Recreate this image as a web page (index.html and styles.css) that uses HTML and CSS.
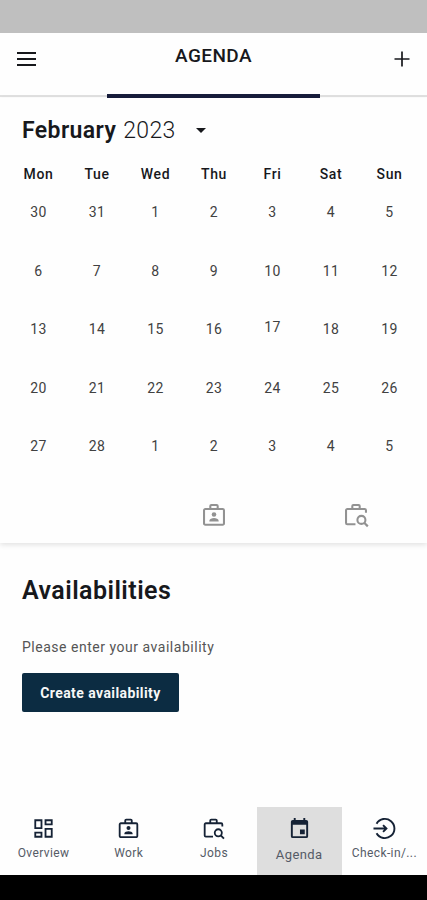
FILE: index.html
```html
<!DOCTYPE html>
<html lang="en">
<head>
    <meta charset="UTF-8">
    <meta name="viewport" content="width=device-width, initial-scale=1.0">
    <title>Agenda</title>
    <link rel="stylesheet" href="styles.css">
</head>
<body>
    <!-- shared icon shapes -->
    <svg width="0" height="0" class="icon-defs">
        <symbol id="icon-work" viewBox="0 0 24 24">
            <path d="M4 6.500h16a1.200 1.200 0 0 1 1.200 1.200v12.100a1.200 1.200 0 0 1-1.200 1.200H4a1.200 1.200 0 0 1-1.200-1.200V7.700A1.200 1.200 0 0 1 4 6.500zM8.600 6.500V3.700a1 1 0 0 1 1-1h4.800a1 1 0 0 1 1 1v2.800" fill="none" stroke="currentColor" stroke-width="1.900"/>
            <circle cx="12" cy="11.500" r="2.100" fill="currentColor"/>
            <path d="M7.700 18v-.8c0-1.500 2.500-2.400 4.300-2.400s4.300.9 4.300 2.400v.8z" fill="currentColor"/>
        </symbol>
        <symbol id="icon-jobs" viewBox="0 0 24 24">
            <path d="M11.500 20.500H4a1.200 1.200 0 0 1-1.200-1.200V7.700A1.200 1.200 0 0 1 4 6.500h16a1.200 1.200 0 0 1 1.200 1.200V10M8.600 6.500V3.700a1 1 0 0 1 1-1h4.800a1 1 0 0 1 1 1v2.800" fill="none" stroke="currentColor" stroke-width="1.900"/>
            <circle cx="17" cy="16.500" r="3.700" fill="none" stroke="currentColor" stroke-width="1.900"/>
            <path d="M19.600 19.200l3.300 3.300" stroke="currentColor" stroke-width="2"/>
        </symbol>
    </svg>

    <div class="status-bar"></div>

    <header class="header">
        <svg class="menu-icon" viewBox="0 0 20 16"><path d="M.5 2h19M.5 8h19M.5 14h19" stroke="currentColor" stroke-width="1.900"/></svg>
        <h1>AGENDA</h1>
        <svg class="add-icon" viewBox="0 0 16 16"><path d="M.5 8h15M8 .5v15" stroke="currentColor" stroke-width="1.700"/></svg>
    </header>
    <div class="tab-line"><div class="tab-active"></div></div>

    <section class="calendar">
        <div class="month">
            <strong>February</strong><span class="year">2023</span>
            <svg class="caret" viewBox="0 0 10 5"><path d="M0 0h10L5 5z" fill="currentColor"/></svg>
        </div>
        <div class="weekdays">
            <span>Mon</span><span>Tue</span><span>Wed</span><span>Thu</span><span>Fri</span><span>Sat</span><span>Sun</span>
        </div>
        <div class="days">
            <span>30</span><span>31</span><span>1</span><span>2</span><span>3</span><span>4</span><span>5</span>
            <span>6</span><span>7</span><span>8</span><span>9</span><span>10</span><span>11</span><span>12</span>
            <span>13</span><span>14</span><span>15</span><span>16</span><span class="today">17</span><span>18</span><span>19</span>
            <span>20</span><span>21</span><span>22</span><span>23</span><span>24</span><span>25</span><span>26</span>
            <span>27</span><span>28</span><span>1</span><span>2</span><span>3</span><span>4</span><span>5</span>
        </div>
        <div class="filters">
            <span></span>
            <svg class="filter-icon"><use href="#icon-work"/></svg>
            <svg class="filter-icon"><use href="#icon-jobs"/></svg>
        </div>
    </section>

    <section class="availabilities">
        <h2>Availabilities</h2>
        <p>Please enter your availability</p>
        <button class="create-button">Create availability</button>
    </section>

    <nav class="bottom-nav">
        <a class="nav-item">
            <svg class="nav-icon" viewBox="0 0 24 24"><path d="M3.400 3.400h6.500v8.200H3.400zM14.100 3.400h6.500v4.300h-6.500zM14.100 12.400h6.500v8.200h-6.500zM3.400 16.300h6.500v4.300H3.400z" fill="none" stroke="currentColor" stroke-width="1.900"/></svg>
            <span>Overview</span>
        </a>
        <a class="nav-item">
            <svg class="nav-icon"><use href="#icon-work"/></svg>
            <span>Work</span>
        </a>
        <a class="nav-item">
            <svg class="nav-icon"><use href="#icon-jobs"/></svg>
            <span>Jobs</span>
        </a>
        <a class="nav-item nav-active">
            <svg class="nav-icon" viewBox="0 0 24 24"><path d="M19 3h-1V1h-2v2H8V1H6v2H5a2 2 0 0 0-2 2v15a2 2 0 0 0 2 2h14a2 2 0 0 0 2-2V5a2 2 0 0 0-2-2zm0 17H5V8h14zM12.500 13h5v5h-5z" fill="currentColor" fill-rule="evenodd"/></svg>
            <span>Agenda</span>
        </a>
        <a class="nav-item">
            <svg class="nav-icon" viewBox="0 0 24 24"><path d="M3.700 7A10 10 0 1 1 3.700 17M.5 12h13M10.500 8.500L14 12l-3.500 3.500" fill="none" stroke="currentColor" stroke-width="2"/></svg>
            <span>Check-in/...</span>
        </a>
    </nav>
    <div class="system-bar"></div>
</body>
</html>
```
FILE: styles.css
```css
* {
    box-sizing: border-box;
}
body {
    margin: 0;
    height: 900px;
    display: flex;
    flex-direction: column;
    overflow: hidden;
    font-family: Roboto, "Liberation Sans", sans-serif;
    background: #fefefe;
    color: #17181c;
}
.icon-defs {
    position: absolute;
}
.status-bar {
    height: 33px;
    background: #bfbfbf;
}
.header {
    height: 61px;
    padding: 0 17px 0 16px;
    display: flex;
    align-items: flex-start;
    justify-content: space-between;
}
.header h1 {
    margin: 12px 4px 0 0;
    font-size: 19px;
    line-height: 22px;
    font-weight: 500;
    letter-spacing: 0.4px;
}
.menu-icon {
    width: 21px;
    height: 16px;
    margin-top: 18px;
}
.add-icon {
    width: 16px;
    height: 16px;
    margin-top: 18px;
}
.tab-line {
    height: 4px;
    background: linear-gradient(#fefefe 1px, #e0e0e0 1px, #e0e0e0 3px, #fefefe 3px);
}
.tab-active {
    width: 213px;
    height: 4px;
    margin: 0 auto;
    background: #171d3b;
}
.calendar {
    height: 445px;
    box-shadow: 0 2px 5px rgba(0,0,0,0.11);
}
.month {
    display: flex;
    align-items: center;
    height: 28px;
    margin-top: 18px;
    padding-left: 22px;
    font-size: 23px;
}
.month strong {
    font-weight: 600;
    letter-spacing: 0.4px;
}
.year {
    margin-left: 7px;
    font-weight: 300;
    letter-spacing: 0.3px;
}
.caret {
    width: 10px;
    height: 5px;
    margin-left: 20px;
}
.weekdays, .days {
    display: grid;
    grid-template-columns: repeat(7, 58.5px);
    justify-content: center;
    padding-left: 1px;
    text-align: center;
}
.weekdays {
    margin-top: 21px;
    font-size: 14px;
    line-height: 18px;
    font-weight: 500;
    letter-spacing: 0.6px;
}
.days {
    grid-auto-rows: 58.5px;
    font-size: 14px;
    line-height: 58.5px;
    color: #414141;
    letter-spacing: 0.5px;
}
.today {
    line-height: 54.500px;
}
.filters {
    display: grid;
    grid-template-columns: repeat(3, 1fr);
    justify-items: center;
    margin-top: 26px;
    padding-left: 1px;
}
.filter-icon {
    width: 26px;
    height: 26px;
    color: #929292;
}
.availabilities {
    padding: 32px 22px 0;
}
.availabilities h2 {
    margin: 0;
    font-size: 25px;
    line-height: 32px;
    font-weight: 600;
    letter-spacing: 0.45px;
}
.availabilities p {
    margin: 30px 0 0;
    font-size: 14px;
    line-height: 20px;
    letter-spacing: 0.52px;
    color: #555;
}
.create-button {
    display: block;
    width: 157px;
    height: 39px;
    margin-top: 16px;
    padding: 0;
    border: 0;
    border-radius: 2px;
    background: #0c2c42;
    color: #f7f7f7;
    font-family: inherit;
    font-size: 14px;
    font-weight: 700;
    letter-spacing: 0.42px;
}
.bottom-nav {
    display: grid;
    grid-template-columns: repeat(5, 1fr);
    height: 68px;
    margin-top: auto;
    padding-left: 1px;
}
.nav-item {
    display: flex;
    flex-direction: column;
    align-items: center;
    padding-top: 10px;
    font-size: 12px;
    line-height: 16px;
    letter-spacing: 0.4px;
    color: #555b66;
}
.nav-item span {
    margin-top: 5px;
}
.nav-icon {
    width: 23px;
    height: 23px;
    color: #152235;
}
.nav-active {
    background: #dedede;
    font-size: 13px;
}
.nav-active span {
    margin-top: 7px;
}
.system-bar {
    height: 25px;
    background: #000;
}
```
